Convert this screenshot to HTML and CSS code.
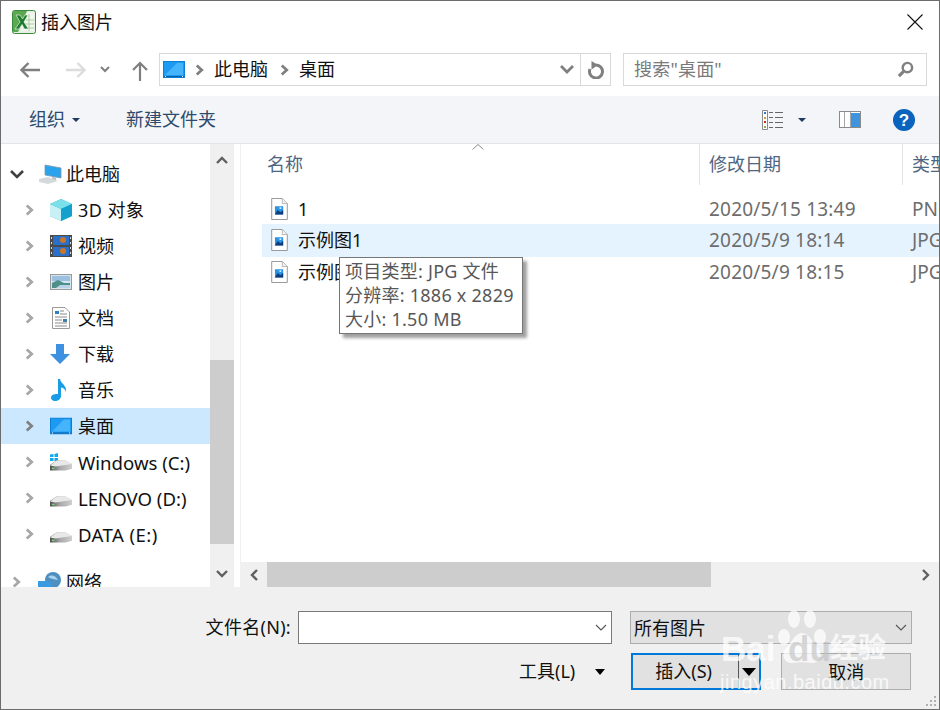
FILE: index.html
```html
<!DOCTYPE html>
<html lang="zh-CN">
<head>
<meta charset="utf-8">
<title>插入图片</title>
<link rel="stylesheet" href="styles.css">
</head>
<body>
<svg class="defs" width="0" height="0" aria-hidden="true">
  <defs>
    <linearGradient id="drivefront" x1="0" x2="1" y1="0" y2="0">
      <stop offset="0" stop-color="#4f4f4f"/>
      <stop offset="0.45" stop-color="#a8a8a8"/>
      <stop offset="1" stop-color="#cfcfcf"/>
    </linearGradient>
    <symbol id="desk" viewBox="0 0 22 17">
      <rect x="0.5" y="0.5" width="21" height="16" fill="#1d9bf3" stroke="#0d7fd6"/>
      <path d="M2 14 L14 2 H20 V14Z" fill="#46b4fb"/>
      <path d="M1 15h20v1H1z" fill="#0a5ea8"/>
      <path d="M2 15h1v1H2zM19 15h1v1h-1z" fill="#fff"/>
    </symbol>
    <symbol id="chev" viewBox="0 0 10 12">
      <path d="M2 1 L7.500 6 L2 11" fill="none" stroke="currentColor" stroke-width="3"/>
    </symbol>
    <symbol id="drive" viewBox="0 0 24 12">
      <path d="M0 6 L7 1 H17 L24 5 V10 L17 12 H0Z" fill="url(#drivefront)"/>
      <path d="M0 6.500 L7 1 H17 L24 5 L6 7.500Z" fill="#e8e8e8"/>
      <path d="M2 9h3v1.500H2z" fill="#7bd67b"/>
    </symbol>
    <symbol id="file" viewBox="0 0 18 24">
      <path d="M0.5 0.5H12L17.5 6V23.5H0.5Z" fill="#fff" stroke="#8c8c8c"/>
      <path d="M12 0.5V6H17.5" fill="#f0f0f0" stroke="#b5b5b5"/>
      <rect x="4" y="9" width="9" height="9" fill="#2a93e4"/>
      <path d="M4 18 L7 13 L10 15.5 L13 13 V18Z" fill="#0f3c78"/>
      <rect x="9" y="10" width="2" height="2" fill="#cfeaff"/>
    </symbol>
  </defs>
</svg>
<div class="dialog">
  <header class="titlebar">
    <svg class="xl" viewBox="0 0 24 24" width="24" height="24">
      <rect x="0.5" y="0.5" width="23" height="23" rx="2" fill="#e6f0e2" stroke="#3b8a3f"/>
      <path d="M1 1H15L11 12 L6 22 H1Z" fill="#5aa84f"/>
      <path d="M14 3h8v18H9z" fill="#f1f6ee"/>
      <path d="M14 10h8M13 14h9M11 18h11M17 4v17" stroke="#a9cf9d" fill="none"/>
      <path d="M4 5h4l2.500 4 2.500-4h3l-4 7 4.500 7h-4l-2.500-4.500-3 4.500H3l5-7z" fill="#1e7a2e" stroke="#fff" stroke-width="0.6"/>
    </svg>
    <span class="title">插入图片</span>
    <svg class="close" viewBox="0 0 16 16" width="16" height="16"><path d="M0.500 0.500L15.500 15.500M15.500 0.500L0.500 15.500" stroke="#111" stroke-width="1.100" fill="none"/></svg>
  </header>

  <nav class="navbar">
    <svg class="nav-back" viewBox="0 0 20 16" width="20" height="16"><path d="M1 8H20M8.500 1L1.500 8L8.500 15" fill="none" stroke="#7f7f7f" stroke-width="2.400"/></svg>
    <svg class="nav-fwd" viewBox="0 0 20 16" width="20" height="16"><path d="M0 8H19M11.500 1L18.500 8L11.500 15" fill="none" stroke="#dcdcdc" stroke-width="2.400"/></svg>
    <svg class="nav-down" viewBox="0 0 10 7" width="10" height="7"><path d="M1 1L5 5L9 1" fill="none" stroke="#7f7f7f" stroke-width="2"/></svg>
    <svg class="nav-up" viewBox="0 0 16 20" width="16" height="20"><path d="M8 20V2M1 9L8 2L15 9" fill="none" stroke="#7f7f7f" stroke-width="2.200"/></svg>
    <div class="address">
      <svg class="addr-icon" width="22" height="17"><use href="#desk"/></svg>
      <svg class="crumb-chev" width="9" height="12"><use href="#chev"/></svg>
      <span class="crumb">此电脑</span>
      <svg class="crumb-chev" width="9" height="12"><use href="#chev"/></svg>
      <span class="crumb">桌面</span>
      <span class="spacer"></span>
      <svg class="addr-drop" viewBox="0 0 14 9" width="14" height="9"><path d="M1 1L7 7L13 1" fill="none" stroke="#7f7f7f" stroke-width="2.800"/></svg>
      <span class="refresh">
        <svg viewBox="0 0 18 18" width="18" height="18"><path d="M9 4A6.500 6.500 0 1 1 3 8" fill="none" stroke="#7f7f7f" stroke-width="3"/><path d="M4.500 0L11 4L4.500 8.500Z" fill="#7f7f7f"/></svg>
      </span>
    </div>
    <div class="search">
      <span class="search-text">搜索"桌面"</span>
      <svg viewBox="0 0 18 18" width="17" height="17"><circle cx="11" cy="7" r="5" fill="#fff" stroke="#808080" stroke-width="2.600"/><path d="M7 11L2 16" stroke="#808080" stroke-width="3.400"/></svg>
    </div>
  </nav>

  <div class="toolbar">
    <span class="tool">组织</span><span class="caret tool-caret"></span>
    <span class="tool tool-new">新建文件夹</span>
    <span class="spacer"></span>
    <svg class="view-icon" viewBox="0 0 22 20" width="22" height="20">
      <path d="M0.500 0.500h5v19h-5z" fill="#fff" stroke="#8a8a8a"/>
      <path d="M2 2h2v2H2z" fill="#2a7fc9"/><path d="M2 7h2v2H2z" fill="#c9a03a"/><path d="M2 11h2v2H2z" fill="#c92a2a"/><path d="M2 16h2v2H2z" fill="#8fb04a"/>
      <path d="M7 2.500h4M13 2.500h8M7 7.500h4M13 7.500h8M7 12.500h4M13 12.500h8M7 17.500h4M13 17.500h8" stroke="#666" fill="none"/>
    </svg>
    <span class="caret view-caret"></span>
    <svg class="pane-icon" viewBox="0 0 22 17" width="22" height="17">
      <rect x="0.500" y="0.500" width="21" height="16" fill="#fff" stroke="#8a8a8a"/>
      <rect x="12" y="2" width="9" height="14" fill="#3f94de"/>
      <path d="M5.500 1v15M11.500 1v15" stroke="#a6a6a6" fill="none"/>
    </svg>
    <svg class="help-icon" viewBox="0 0 22 22" width="22" height="22">
      <circle cx="11" cy="11" r="11" fill="#0a63bd"/>
      <text x="11" y="17" text-anchor="middle" class="help-q">?</text>
    </svg>
  </div>

  <main class="main">
    <aside class="tree-wrap">
      <div class="tree">
        <div class="row top">
          <svg class="twist open" viewBox="0 0 14 9" width="14" height="9"><path d="M1 1L7 7L13 1" fill="none" stroke="#404040" stroke-width="2.600"/></svg>
          <svg class="ico pc" viewBox="0 0 24 20" width="24" height="20">
            <path d="M7 1L23 4V14L7 11Z" fill="#2aa3ec" stroke="#7c98ad" stroke-width="0.800"/>
            <path d="M14 13h4v3h-4z" fill="#b7c4cc"/>
            <path d="M1 15L10 13L20 17L10 20L1 18Z" fill="#d5d9dc"/>
          </svg>
          <span class="label">此电脑</span>
        </div>
        <div class="row">
          <svg class="twist" width="9" height="12"><use href="#chev"/></svg>
          <svg class="ico" viewBox="0 0 22 22" width="22" height="22">
            <path d="M11 0L22 5V17L11 22L0 17V5Z" fill="#23b0c9"/>
            <path d="M0 5L11 10V22L0 17Z" fill="#c8f1f5"/>
            <path d="M11 0L22 5L11 10L0 5Z" fill="#7ce0ea"/>
            <path d="M11 10L22 5V17L11 22Z" fill="#14a0cc"/>
          </svg>
          <span class="label wide">3D 对象</span>
        </div>
        <div class="row">
          <svg class="twist" width="9" height="12"><use href="#chev"/></svg>
          <svg class="ico" viewBox="0 0 22 22" width="22" height="22">
            <rect width="22" height="22" fill="#4a4a4a"/>
            <rect x="3" y="1" width="16" height="9" fill="#2a6fc9"/>
            <rect x="3" y="12" width="16" height="9" fill="#2a6fc9"/>
            <circle cx="13" cy="5" r="3" fill="#c9772a"/>
            <circle cx="13" cy="16" r="3" fill="#c9772a"/>
            <path d="M1 2h1v2H1zM1 7h1v2H1zM1 12h1v2H1zM1 17h1v2H1zM20 2h1v2h-1zM20 7h1v2h-1zM20 12h1v2h-1zM20 17h1v2h-1z" fill="#ddd"/>
          </svg>
          <span class="label">视频</span>
        </div>
        <div class="row">
          <svg class="twist" width="9" height="12"><use href="#chev"/></svg>
          <svg class="ico" viewBox="0 0 22 16" width="22" height="16">
            <rect x="0.500" y="0.500" width="21" height="15" fill="#d6e4f0" stroke="#9a9a9a"/>
            <path d="M2 2h18v5H2z" fill="#9cc0e0"/>
            <path d="M2 9L8 6L14 9L20 9V14H2Z" fill="#4f8f8a"/>
            <path d="M10 11H20V14H6Z" fill="#b9d4e8"/>
          </svg>
          <span class="label">图片</span>
        </div>
        <div class="row">
          <svg class="twist" width="9" height="12"><use href="#chev"/></svg>
          <svg class="ico doc" viewBox="0 0 18 22" width="18" height="22">
            <path d="M0.500 0.500H13L17.500 5V21.500H0.500Z" fill="#fff" stroke="#9a9a9a"/>
            <path d="M3 4h4v3H3z" fill="#2a7fc9"/>
            <path d="M3 10h12M3 13h7M3 16h12M3 19h12M8 4h4M8 7h7" stroke="#8a8a8a" fill="none"/>
            <path d="M11 12h4v3h-4z" fill="#3f7fa8"/>
          </svg>
          <span class="label">文档</span>
        </div>
        <div class="row">
          <svg class="twist" width="9" height="12"><use href="#chev"/></svg>
          <svg class="ico" viewBox="0 0 20 20" width="20" height="20"><path d="M6 0H14V10H20L10 20L0 10H6Z" fill="#3d91e0"/></svg>
          <span class="label">下载</span>
        </div>
        <div class="row">
          <svg class="twist" width="9" height="12"><use href="#chev"/></svg>
          <svg class="ico" viewBox="0 0 18 22" width="18" height="22"><path d="M8 0H10C11 5 17 6 16 13C15 10 13 8.500 11 8.500V17C11 20 8 22 5 22C2 22 1 20 1 18.500C1 16 4 14.500 8 15Z" fill="#1a9be6"/></svg>
          <span class="label">音乐</span>
        </div>
        <div class="row selected">
          <svg class="twist" width="9" height="12"><use href="#chev"/></svg>
          <svg class="ico" width="22" height="17"><use href="#desk"/></svg>
          <span class="label">桌面</span>
        </div>
        <div class="row">
          <svg class="twist" width="9" height="12"><use href="#chev"/></svg>
          <svg class="ico" viewBox="0 0 22 18" width="22" height="18">
            <path d="M0 1.500L3.500 1V4H0zM4.500 1L8 0V4H4.500zM0 5H3.500V8H0zM4.500 5H8V9L4.500 8z" fill="#11a9ee"/>
            <use href="#drive" x="0" y="6" width="22" height="12"/>
          </svg>
          <span class="latin">Windows (C:)</span>
        </div>
        <div class="row">
          <svg class="twist" width="9" height="12"><use href="#chev"/></svg>
          <svg class="ico" viewBox="0 0 22 18" width="22" height="18"><use href="#drive" x="0" y="6" width="22" height="12"/></svg>
          <span class="latin">LENOVO (D:)</span>
        </div>
        <div class="row">
          <svg class="twist" width="9" height="12"><use href="#chev"/></svg>
          <svg class="ico" viewBox="0 0 22 18" width="22" height="18"><use href="#drive" x="0" y="6" width="22" height="12"/></svg>
          <span class="latin data">DATA (E:)</span>
        </div>
        <div class="row top net">
          <svg class="twist" width="9" height="12"><use href="#chev"/></svg>
          <svg class="ico pc" viewBox="0 0 24 20" width="24" height="20">
            <circle cx="15" cy="8" r="8" fill="#4c8fc0"/>
            <path d="M10 5C14 2 18 4 20 8C16 7 13 7 10 5Z" fill="#a9d3ea"/>
            <path d="M0 9H10L14 12V20H0Z" fill="#3a9be0"/>
          </svg>
          <span class="label">网络</span>
        </div>
      </div>
      <div class="vscroll">
        <svg class="sb-arrow" viewBox="0 0 12 8" width="12" height="8"><path d="M1 7L6 2L11 7" fill="none" stroke="#606060" stroke-width="2.400"/></svg>
        <div class="vtrack"><div class="vthumb"></div></div>
        <svg class="sb-arrow" viewBox="0 0 12 8" width="12" height="8"><path d="M1 1L6 6L11 1" fill="none" stroke="#606060" stroke-width="2.400"/></svg>
      </div>
    </aside>

    <section class="list">
      <div class="list-head">
        <span class="col-name">名称</span>
        <span class="col-date">修改日期</span>
        <span class="col-type">类型</span>
        <svg class="sort" viewBox="0 0 12 6" width="12" height="6"><path d="M0.500 5.500L6 0.500L11.500 5.500" fill="none" stroke="#8a8a8a"/></svg>
      </div>
      <div class="files">
        <div class="file">
          <span class="file-name"><svg class="file-ico" width="17" height="22"><use href="#file"/></svg><span class="file-num">1</span></span>
          <span class="file-date">2020/5/15 13:49</span><span class="file-type">PNG</span>
        </div>
        <div class="file hover">
          <span class="file-name"><svg class="file-ico" width="17" height="22"><use href="#file"/></svg><span class="file-cjk">示例图1</span></span>
          <span class="file-date">2020/5/9 18:14</span><span class="file-type">JPG</span>
        </div>
        <div class="file">
          <span class="file-name"><svg class="file-ico" width="17" height="22"><use href="#file"/></svg><span class="file-cjk">示例图2</span></span>
          <span class="file-date">2020/5/9 18:15</span><span class="file-type">JPG</span>
        </div>
      </div>
      <div class="tooltip">
        <div>项目类型: JPG 文件</div>
        <div>分辨率: 1886 x 2829</div>
        <div>大小: 1.50 MB</div>
      </div>
      <div class="hscroll">
        <svg viewBox="0 0 8 12" width="8" height="12"><path d="M7 1L2 6L7 11" fill="none" stroke="#606060" stroke-width="2.400"/></svg>
        <div class="htrack"><div class="hthumb"></div></div>
        <svg viewBox="0 0 8 12" width="8" height="12"><path d="M1 1L6 6L1 11" fill="none" stroke="#606060" stroke-width="2.400"/></svg>
      </div>
    </section>
  </main>

  <footer class="footer">
    <div class="foot-row">
      <label class="foot-label">文件名(N):</label>
      <div class="field name-field"><svg viewBox="0 0 12 7" width="12" height="7"><path d="M1 1L6 6L11 1" fill="none" stroke="#555" stroke-width="1.100"/></svg></div>
      <div class="field type-field"><span class="type-text">所有图片</span><svg viewBox="0 0 12 7" width="12" height="7"><path d="M1 1L6 6L11 1" fill="none" stroke="#555" stroke-width="1.100"/></svg></div>
    </div>
    <div class="foot-row actions">
      <span class="tools">工具(L)</span><span class="caret black tools-caret"></span>
      <div class="btn primary"><span class="btn-text">插入(S)</span><span class="btn-split"><span class="caret black big"></span></span></div>
      <div class="btn cancel"><span class="cancel-text">取消</span></div>
    </div>
    <div class="watermark" aria-hidden="true">
      <svg class="paw" viewBox="0 0 50 56" width="50" height="56">
        <ellipse cx="7" cy="28" rx="6" ry="8"/><ellipse cx="17" cy="10" rx="6" ry="9"/><ellipse cx="33" cy="10" rx="6" ry="9"/><ellipse cx="43" cy="28" rx="6" ry="8"/>
        <path d="M25 24C33 24 35 34 41 39C47 46 42 55 34 54C28 53 22 53 16 54C8 55 3 46 9 39C15 34 17 24 25 24Z"/>
      </svg>
      <span class="wm-bai">Bai</span>
      <span class="wm-du">du</span>
      <span class="wm-cn">经验</span>
      <span class="wm-sub">jingyan.baidu.com</span>
    </div>
    <svg class="grip" viewBox="0 0 12 12" width="12" height="12"><path d="M9 1h2v2H9zM5 5h2v2H5zM9 5h2v2H9zM1 9h2v2H1zM5 9h2v2H5zM9 9h2v2H9z" fill="#b0b0b0"/></svg>
  </footer>
</div>
</body>
</html>
```

FILE: styles.css
```css
* { box-sizing: border-box; }
html, body { margin: 0; padding: 0; }
body {
  width: 940px;
  height: 710px;
  overflow: hidden;
  background: #fff;
  font-family: "Noto Sans", "Noto Sans CJK SC", sans-serif;
  font-size: 18px;
  color: #111;
}
.defs { position: absolute; }
.dialog {
  width: 940px;
  height: 710px;
  display: flex;
  flex-direction: column;
  border: 1px solid #6c6c6c;
  overflow: hidden;
}
.spacer { flex: 1; }

/* title bar */
.titlebar {
  height: 41px;
  flex: none;
  display: flex;
  align-items: center;
  padding: 0 16px 0 11px;
  position: relative;
}
.xl { flex: none; }
.title { margin-left: 5px; line-height: 24px; }
.close { margin-left: auto; }

/* nav */
.navbar {
  height: 54px;
  flex: none;
  display: flex;
  align-items: flex-start;
  padding-top: 11px;
  position: relative;
}
.nav-back { margin: 9px 0 0 19px; }
.nav-fwd { margin: 9px 0 0 26px; }
.nav-down { margin: 13px 0 0 14px; }
.nav-up { margin: 8px 0 0 22px; }
.address {
  margin-left: 11px;
  width: 452px;
  height: 33px;
  border: 1px solid #d9d9d9;
  display: flex;
  align-items: center;
  padding-left: 3px;
}
.crumb-chev { color: #7f7f7f; margin: 0 10px 0 12px; flex: none; }
.crumb { color: #111; padding-bottom: 4px; }
.addr-icon { flex: none; margin-right: -2px; }
.addr-drop { margin-right: 6px; }
.refresh {
  width: 30px;
  height: 100%;
  border-left: 1px solid #d9d9d9;
  display: flex;
  align-items: center;
  justify-content: center;
}
.search {
  margin-left: 12px;
  width: 304px;
  height: 33px;
  border: 1px solid #d9d9d9;
  display: flex;
  align-items: center;
  justify-content: space-between;
  padding: 0 12px 0 10px;
  color: #7a7a7a;
}
.search-text { padding-bottom: 4px; letter-spacing: 0.2px; }

/* toolbar */
.toolbar {
  height: 48px;
  flex: none;
  background: #f3f5f8;
  border-bottom: 1px solid #e3e4e6;
  display: flex;
  align-items: center;
  padding: 0 24px 0 28px;
  color: #2e4a6d;
}
.tool { padding-bottom: 4px; }
.caret {
  width: 0;
  height: 0;
  border-left: 4px solid transparent;
  border-right: 4px solid transparent;
  border-top: 4px solid #1f3a5f;
  display: inline-block;
  flex: none;
}
.tool-caret { margin-left: 7px; }
.tool-new { margin-left: 46px; }
.view-caret { margin-left: 14px; }
.pane-icon { margin-left: 33px; }
.help-icon { margin-left: 32px; }
.help-q { font-family: "Liberation Sans", sans-serif; font-size: 17px; font-weight: 700; fill: #fff; }

/* main */
.main {
  flex: 1;
  min-height: 0;
  display: flex;
}
.tree-wrap {
  width: 233px;
  flex: none;
  display: flex;
  border-right: 1px solid #f0f0f0;
}
.tree {
  width: 209px;
  flex: none;
  padding-top: 12px;
  overflow: hidden;
}
.row {
  height: 36px;
  display: flex;
  align-items: center;
  position: relative;
  padding-left: 77px;
  white-space: nowrap;
}
.row.selected { background: #cce8ff; }
.label { padding-bottom: 2px; }
.label.wide { letter-spacing: 0.5px; }
.latin { font-size: 18.600px; }
.latin.data { letter-spacing: 0.4px; }
.twist { position: absolute; left: 24px; top: 12px; color: #a6a6a6; }
.selected .twist { color: #808080; }
.ico { position: absolute; left: 49px; top: 50%; transform: translateY(-50%); }
.ico.doc { left: 51px; }
.row.top { padding-left: 65px; }
.row.top .twist { left: 11px; }
.row.top .twist.open { left: 9px; top: 14px; }
.row.top .ico { left: 37px; }
.row.net { margin-top: 12px; }
.vscroll {
  width: 24px;
  flex: none;
  background: #f0f0f0;
  display: flex;
  flex-direction: column;
  align-items: center;
  padding: 12px 0 9px;
}
.vtrack { flex: 1; width: 100%; padding: 196px 0 26px; }
.vthumb { height: 100%; background: #cdcdcd; }
.sb-arrow { flex: none; }

.list {
  flex: 1;
  min-width: 0;
  display: flex;
  flex-direction: column;
  position: relative;
  margin-left: 6px;
  border-left: 1px solid #f0f0f0;
}
.list-head {
  height: 41px;
  flex: none;
  display: flex;
  align-items: center;
  color: #4e6681;
  position: relative;
  white-space: nowrap;
}
.col-name { width: 458px; padding: 0 0 4px 26px; flex: none; }
.col-date { width: 203px; padding-left: 9px; flex: none; border-left: 1px solid #e5e5e5; height: 100%; line-height: 41px; }
.col-type { flex: 1; padding-left: 9px; border-left: 1px solid #e5e5e5; height: 100%; line-height: 41px; overflow: hidden; }
.sort { position: absolute; left: 231px; top: 0; }
.files { flex: 1; padding: 8px 0 0 21px; min-height: 0; }
.file {
  height: 31px;
  display: flex;
  align-items: center;
  white-space: nowrap;
  overflow: hidden;
}
.file.hover { height: 33px; background: #e5f3ff; padding-bottom: 1px; margin-bottom: -1px; }
.file-name { width: 447px; flex: none; display: flex; align-items: center; padding-left: 9px; gap: 10px; color: #111; }
.file-ico { flex: none; }
.file-cjk { padding-bottom: 2px; }
.file-date { width: 203px; flex: none; color: #6d6d6d; font-size: 19px; letter-spacing: 0.2px; }
.file-type { color: #6d6d6d; font-size: 19px; }
.tooltip {
  position: absolute;
  left: 98px;
  top: 113px;
  width: 184px;
  height: 77px;
  background: #fff;
  border: 1px solid #767676;
  box-shadow: 4px 4px 3px #a0a0a0;
  padding: 1px 5px;
  color: #575757;
  line-height: 24px;
  white-space: nowrap;
  letter-spacing: 0.25px;
}
.hscroll {
  height: 25px;
  flex: none;
  background: #f0f0f0;
  display: flex;
  align-items: center;
  padding: 0 9px;
  gap: 9px;
}
.htrack { flex: 1; height: 100%; }
.hthumb { width: 444px; height: 100%; background: #cdcdcd; }

/* footer */
.footer {
  height: 122px;
  flex: none;
  background: #f0f0f0;
  padding-top: 24px;
  position: relative;
}
.foot-row { display: flex; align-items: center; height: 33px; }
.foot-label { width: 290px; padding-bottom: 4px; text-align: right; flex: none; white-space: nowrap; letter-spacing: 0.3px; }
.field { height: 33px; display: flex; align-items: center; justify-content: space-between; flex: none; }
.name-field {
  margin-left: 7px;
  width: 314px;
  background: #fff;
  border: 1px solid #7a7a7a;
  justify-content: flex-end;
  padding-right: 4px;
}
.type-field {
  margin-left: 18px;
  width: 282px;
  background: #e1e1e1;
  border: 1px solid #adadad;
  padding: 0 4px 0 3px;
}
.type-text { padding-bottom: 2px; }
.actions { margin-top: 9px; height: 37px; }
.tools { margin-left: 518px; padding-bottom: 4px; }
.tools-caret { margin-left: 20px; }
.caret.black { border-top-color: #000; border-left-width: 5px; border-right-width: 5px; border-top-width: 6px; }
.btn { height: 37px; flex: none; display: flex; align-items: center; background: #e1e1e1; }
.primary {
  margin-left: 26px;
  width: 130px;
  border: 2px solid #0078d7;
  padding-left: 22px;
}
.btn-text { flex: 1; padding-bottom: 4px; }
.btn-split {
  width: 21px;
  height: 100%;
  border-left: 1px solid #555;
  display: flex;
  align-items: center;
  justify-content: center;
}
.caret.big { border-left-width: 7px; border-right-width: 7px; border-top-width: 8px; }
.cancel {
  margin-left: 20px;
  width: 130px;
  border: 1px solid #adadad;
  justify-content: center;
}
.cancel-text { padding-bottom: 2px; }

/* watermark */
.watermark { position: absolute; left: 0; top: 0; width: 100%; height: 100%; pointer-events: none; color: rgba(255,255,255,0.75); font-family: "Liberation Sans", "Noto Sans CJK SC", sans-serif; white-space: nowrap; }
.paw { position: absolute; left: 776px; top: 22px; fill: rgba(255,255,255,0.72); }
.wm-bai { position: absolute; left: 720px; top: 42px; font-size: 35px; font-weight: 700; line-height: 40px; }
.wm-du { position: absolute; left: 787px; top: 42px; font-size: 35px; font-weight: 700; line-height: 40px; color: rgba(190,190,190,0.6); }
.wm-cn { position: absolute; left: 829px; top: 42px; font-size: 28px; font-weight: 700; line-height: 40px; }
.wm-sub { position: absolute; left: 719px; top: 83px; font-size: 20px; line-height: 24px; letter-spacing: 0.5px; color: rgba(255,255,255,0.8); }
.grip { position: absolute; right: 2px; bottom: 2px; }
```
